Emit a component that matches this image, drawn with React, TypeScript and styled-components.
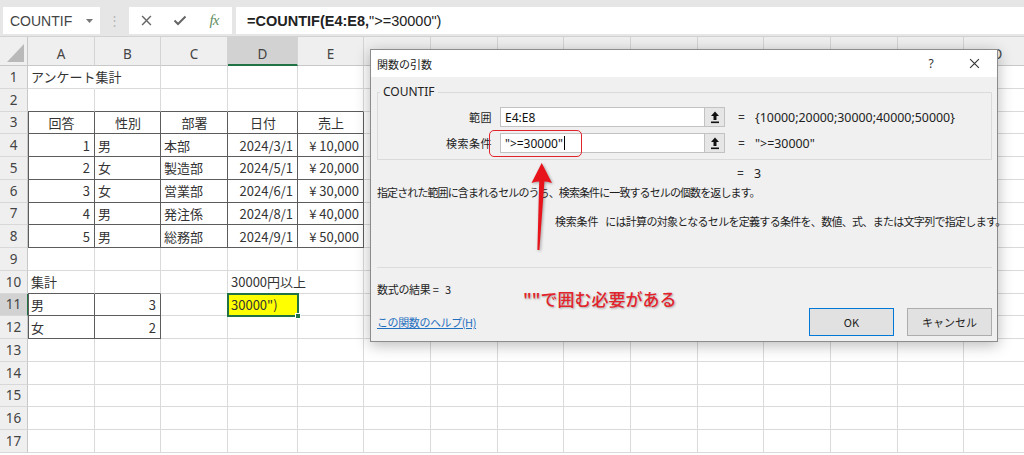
import React from 'react';
import styled, { createGlobalStyle } from 'styled-components';

const GlobalStyle = createGlobalStyle`
  html, body { margin: 0; padding: 0; background: #ffffff; }
  body { overflow: hidden; }
  *, *::before, *::after { box-sizing: border-box; }
`;

const JP = `"Noto Sans CJK JP", "Noto Sans", sans-serif`;
const LATIN = `"Liberation Sans", "Noto Sans CJK JP", sans-serif`;

const Page = styled.div`
  position: relative;
  width: 1024px;
  height: 455px;
  overflow: hidden;
  display: flex;
  flex-direction: column;
  background: #fff;
`;

/* ---------- formula bar ---------- */
const FormulaBar = styled.div`
  display: flex;
  align-items: stretch;
  height: 37px;
  padding: 7px 0 2px 3px;
  background: #e6e6e6;
  border-bottom: 1px solid #d2d2d2;
  flex-shrink: 0;
`;
const NameBox = styled.div`
  width: 97px;
  background: #fff;
  display: flex;
  align-items: center;
  justify-content: space-between;
  padding: 0 7px 0 7px;
  font: 14px ${LATIN};
  color: #444;
`;
const Divider = styled.div`
  width: 29px;
  display: flex;
  align-items: center;
  justify-content: center;
  color: #b8b8b8;
  font: 13px ${LATIN};
`;
const FnButtons = styled.div`
  width: 103px;
  background: #fff;
  display: flex;
`;
const FnSlot = styled.div`
  width: 34px;
  display: flex;
  align-items: center;
  justify-content: center;
`;
const FxText = styled.span`
  font: italic 15px "Liberation Serif", serif;
  color: #5f8f5f;
  letter-spacing: -1px;
`;
const FormulaInput = styled.div`
  flex: 1;
  margin-left: 4px;
  background: #fff;
  display: flex;
  align-items: center;
  padding-left: 11px;
  font: 14.5px ${LATIN};
  color: #222;
  white-space: nowrap;
`;
const Strong = styled.span`
  font-weight: bold;
`;

/* ---------- sheet ---------- */
const Sheet = styled.div`
  display: grid;
  grid-template-columns: 28px 67px 66px 67px 70px 66px 67px 67px 66px 67px 67px 66px 67px 67px 66px 67px;
  grid-template-rows: 29px repeat(17, 22.75px);
  background: #fff;
`;
const Corner = styled.div`
  background: #efefef;
  border-right: 1px solid #c8c8c8;
  border-bottom: 1px solid #c8c8c8;
  display: flex;
  align-items: flex-end;
  justify-content: flex-end;
  padding: 0 3px 3px 0;
`;
const ColHead = styled.div<{ $sel?: boolean }>`
  background: ${(p) => (p.$sel ? '#d2d2d2' : '#efefef')};
  border-right: 1px solid #d4d4d4;
  border-bottom: ${(p) => (p.$sel ? '2px solid #217346' : '1px solid #c8c8c8')};
  display: flex;
  align-items: center;
  justify-content: center;
  padding-top: ${(p) => (p.$sel ? '6px' : '5px')};
  font: 13.5px "Noto Sans", sans-serif;
  color: #444;
`;
const RowHead = styled.div<{ $sel?: boolean }>`
  background: ${(p) => (p.$sel ? '#d2d2d2' : '#efefef')};
  border-right: 1px solid ${(p) => (p.$sel ? '#217346' : '#c8c8c8')};
  border-bottom: 1px solid #d8d8d8;
  display: flex;
  align-items: center;
  justify-content: center;
  font: 13.5px "Noto Sans", sans-serif;
  color: #444;
`;

type Align = 'l' | 'r' | 'c';
const Cell = styled.div<{
  $align?: Align;
  $rb?: boolean;
  $bb?: boolean;
  $lb?: boolean;
  $hr?: boolean;
  $active?: boolean;
}>`
  position: relative;
  z-index: ${(p) => (p.$active ? 2 : p.$hr ? 1 : 'auto')};
  display: flex;
  align-items: center;
  justify-content: ${(p) => (p.$align === 'r' ? 'flex-end' : p.$align === 'c' ? 'center' : 'flex-start')};
  padding: 0 ${(p) => (p.$align === 'r' ? '4px' : '2px')} 0 3px;
  border-right: 1px solid ${(p) => (p.$rb ? '#5c5c5c' : p.$hr ? 'transparent' : '#dadada')};
  border-bottom: 1px solid ${(p) => (p.$bb ? '#5c5c5c' : '#dadada')};
  box-shadow: ${(p) => (p.$lb ? 'inset 1px 0 0 #5c5c5c' : 'none')};
  background: ${(p) => (p.$active ? '#ffff00' : 'transparent')};
  outline: ${(p) => (p.$active ? '2px solid #217346' : 'none')};
  outline-offset: -1px;
  font: 13px ${JP};
  color: #333;
  white-space: nowrap;
  &::after {
    content: '';
    display: ${(p) => (p.$active ? 'block' : 'none')};
    position: absolute;
    right: -4px;
    bottom: -4px;
    width: 6px;
    height: 6px;
    background: #217346;
    border: 1px solid #fff;
  }
`;

/* ---------- dialog ---------- */
const Dialog = styled.div`
  position: absolute;
  left: 370px;
  top: 49px;
  width: 628px;
  height: 293px;
  display: flex;
  flex-direction: column;
  background: #f0f0f0;
  border: 1px solid #8c8c8c;
  box-shadow: 0 3px 14px rgba(0, 0, 0, 0.28);
  font: 11px ${JP};
  color: #1e1e1e;
`;
const TitleBar = styled.div`
  height: 27px;
  background: #fff;
  display: flex;
  align-items: center;
  justify-content: space-between;
  padding-left: 6px;
  flex-shrink: 0;
`;
const TitleText = styled.span`
  font: 11px ${JP};
  color: #222;
`;
const TitleControls = styled.div`
  display: flex;
  height: 100%;
`;
const TitleBtn = styled.div<{ $w: number }>`
  width: ${(p) => p.$w}px;
  display: flex;
  align-items: center;
  justify-content: center;
  font: 12px "Noto Sans", sans-serif;
  color: #333;
`;
const DialogBody = styled.div`
  flex: 1;
  display: flex;
  flex-direction: column;
  padding: 0 5px 0 6px;
`;
const GroupBox = styled.fieldset`
  margin: 8px 0 0 0;
  padding: 8px 0 6px 0;
  border: 1px solid #dadada;
  min-width: 0;
  display: flex;
  flex-direction: column;
  gap: 6px;
`;
const Legend = styled.legend`
  padding: 0 3px;
  margin-left: 2px;
  font: 12px "Noto Sans", sans-serif;
  line-height: 14px;
  color: #222;
`;
const ArgRow = styled.div`
  display: flex;
  align-items: center;
  height: 20px;
`;
const ArgLabel = styled.div`
  width: 114px;
  margin-right: 8px;
  text-align: right;
  font: 11px ${JP};
  letter-spacing: 0.5px;
`;
const ArgInput = styled.div`
  width: 205px;
  height: 20px;
  background: #fff;
  border: 1px solid #c2c2c2;
  display: flex;
  align-items: center;
  padding-left: 4px;
  font: 12px "Noto Sans", sans-serif;
  color: #111;
`;
const Caret = styled.span`
  display: inline-block;
  width: 1px;
  height: 14px;
  background: #000;
  margin-left: 1px;
`;
const RefButton = styled.div`
  width: 20px;
  height: 20px;
  background: #e6e6e6;
  border: 1px solid #c2c2c2;
  border-left: none;
  display: flex;
  align-items: center;
  justify-content: center;
`;
const Eq = styled.span<{ $lead: number }>`
  margin-left: ${(p) => p.$lead}px;
  width: 9px;
  font: 12px "Noto Sans", sans-serif;
  color: #333;
`;
const ArgValue = styled.span`
  margin-left: 8px;
  font: 12.4px "Noto Sans", sans-serif;
  color: #222;
  white-space: nowrap;
`;
const ResultRow = styled.div`
  display: flex;
  align-items: center;
  height: 16px;
  margin-top: 5px;
`;
const Description = styled.div`
  margin-top: 3px;
  height: 16px;
  line-height: 16px;
  letter-spacing: -0.9px;
  white-space: nowrap;
`;
const ArgHelp = styled.div`
  margin-top: 13px;
  height: 16px;
  line-height: 16px;
  padding-left: 178px;
  display: flex;
  white-space: nowrap;
`;
const ArgHelpName = styled.span`
  margin-right: 7px;
  letter-spacing: -0.2px;
`;
const ArgHelpText = styled.span`
  letter-spacing: -0.7px;
`;
const Separator = styled.div`
  margin-top: 38px;
  height: 1px;
  background: #dcdcdc;
`;
const Footer = styled.div`
  flex: 1;
  display: flex;
  justify-content: space-between;
  align-items: flex-end;
  padding-bottom: 5px;
`;
const FooterInfo = styled.div`
  display: flex;
  flex-direction: column;
  align-self: stretch;
  padding-top: 13px;
  gap: 17px;
`;
const FooterLine = styled.div`
  height: 16px;
  line-height: 16px;
  white-space: nowrap;
  letter-spacing: -0.3px;
`;
const HelpLink = styled.a`
  height: 16px;
  line-height: 16px;
  color: #1f6fbf;
  text-decoration: underline;
  white-space: nowrap;
  letter-spacing: -0.4px;
`;
const ButtonRow = styled.div`
  display: flex;
  gap: 13px;
`;
const DlgButton = styled.div<{ $primary?: boolean }>`
  width: 85px;
  height: 28px;
  background: #e1e1e1;
  border: 1px solid ${(p) => (p.$primary ? '#0078d7' : '#adadad')};
  display: flex;
  align-items: center;
  justify-content: center;
  font: 11px ${JP};
  color: #222;
`;

/* ---------- annotation overlays ---------- */
const RedBox = styled.div`
  position: absolute;
  left: 489px;
  top: 130px;
  width: 93px;
  height: 27px;
  border: 1.5px solid #e3232c;
  border-radius: 5px;
`;
const ArrowSvg = styled.svg`
  position: absolute;
  left: 526px;
  top: 158px;
  filter: drop-shadow(1px 1px 1.5px rgba(0, 0, 0, 0.35));
`;
const Note = styled.div`
  position: absolute;
  left: 523px;
  top: 288px;
  font: 500 17px ${JP};
  line-height: 22px;
  color: #e3232c;
  text-shadow: 1px 1px 2px rgba(0, 0, 0, 0.3);
  white-space: nowrap;
`;

/* ---------- data ---------- */
type CellDef = {
  t?: React.ReactNode;
  a?: Align;
  rb?: boolean;
  bb?: boolean;
  lb?: boolean;
  hr?: boolean;
  active?: boolean;
};

const COLS = ['A', 'B', 'C', 'D', 'E', 'F', 'G', 'H', 'I', 'J', 'K', 'L', 'M', 'N', 'O'];

const boxed = (t: string, a: Align, lb = false): CellDef => ({ t, a, rb: true, bb: true, lb });

const tableRows: [string, string, string, string, string][] = [
  ['1', '男', '本部', '2024/3/1', '¥ 10,000'],
  ['2', '女', '製造部', '2024/5/1', '¥ 20,000'],
  ['3', '女', '営業部', '2024/6/1', '¥ 30,000'],
  ['4', '男', '発注係', '2024/8/1', '¥ 40,000'],
  ['5', '男', '総務部', '2024/9/1', '¥ 50,000'],
];

const sheetData: Record<number, Record<string, CellDef>> = {
  1: { A: { t: 'アンケート集計', hr: true } },
  2: { A: { bb: true }, B: { bb: true }, C: { bb: true }, D: { bb: true }, E: { bb: true } },
  3: {
    A: boxed('回答', 'c', true),
    B: boxed('性別', 'c'),
    C: boxed('部署', 'c'),
    D: boxed('日付', 'c'),
    E: boxed('売上', 'c'),
  },
  10: {
    A: { t: '集計', bb: true },
    B: { bb: true },
    D: { t: '30000円以上', hr: true },
  },
  11: {
    A: boxed('男', 'l', true),
    B: boxed('3', 'r'),
    D: { t: '30000")', active: true },
  },
  12: {
    A: boxed('女', 'l', true),
    B: boxed('2', 'r'),
  },
};
tableRows.forEach((r, i) => {
  sheetData[4 + i] = {
    A: boxed(r[0], 'r', true),
    B: boxed(r[1], 'l'),
    C: boxed(r[2], 'l'),
    D: boxed(r[3], 'r'),
    E: boxed(r[4], 'r'),
  };
});

/* ---------- icons ---------- */
const CrossIcon = ({ size = 10, color = '#666', w = 1.3 }: { size?: number; color?: string; w?: number }) => (
  <svg width={size} height={size} viewBox="0 0 10 10">
    <path d="M1 1 L9 9 M9 1 L1 9" stroke={color} strokeWidth={w} fill="none" />
  </svg>
);
const CheckIcon = () => (
  <svg width="14" height="11" viewBox="0 0 14 11">
    <path d="M1.5 5.5 L5 9 L12.5 1.5" stroke="#666" strokeWidth="2" fill="none" />
  </svg>
);
const DropArrow = () => (
  <svg width="7" height="4" viewBox="0 0 7 4">
    <path d="M0 0 L7 0 L3.5 4 Z" fill="#777" />
  </svg>
);
const CornerTriangle = () => (
  <svg width="17" height="18" viewBox="0 0 17 18">
    <path d="M17 0 L17 18 L0 18 Z" fill="#b9b9b9" />
  </svg>
);
const RefIcon = () => (
  <svg width="10" height="13" viewBox="0 0 10 13">
    <path d="M5 0.5 L9 5 L6.5 5 L6.5 9 L3.5 9 L3.5 5 L1 5 Z" fill="#111" />
    <rect x="1" y="10.5" width="8" height="1.6" fill="#111" />
  </svg>
);

export default function App() {
  const rowNums = Array.from({ length: 17 }, (_, i) => i + 1);
  return (
    <Page>
      <GlobalStyle />
      <FormulaBar>
        <NameBox>
          <span>COUNTIF</span>
          <DropArrow />
        </NameBox>
        <Divider>⋮</Divider>
        <FnButtons>
          <FnSlot>
            <CrossIcon size={11} />
          </FnSlot>
          <FnSlot>
            <CheckIcon />
          </FnSlot>
          <FnSlot>
            <FxText>fx</FxText>
          </FnSlot>
        </FnButtons>
        <FormulaInput>
          <Strong>=COUNTIF(E4:E8,</Strong>
          <span>"&gt;=30000")</span>
        </FormulaInput>
      </FormulaBar>

      <Sheet>
        <Corner>
          <CornerTriangle />
        </Corner>
        {COLS.map((c) => (
          <ColHead key={c} $sel={c === 'D'}>
            {c}
          </ColHead>
        ))}
        {rowNums.map((r) => (
          <React.Fragment key={r}>
            <RowHead $sel={r === 11}>{r}</RowHead>
            {COLS.map((c) => {
              const d = sheetData[r]?.[c] ?? {};
              return (
                <Cell
                  key={c}
                  $align={d.a}
                  $rb={d.rb}
                  $bb={d.bb}
                  $lb={d.lb}
                  $hr={d.hr}
                  $active={d.active}
                >
                  {d.t}
                </Cell>
              );
            })}
          </React.Fragment>
        ))}
      </Sheet>

      <Dialog>
        <TitleBar>
          <TitleText>関数の引数</TitleText>
          <TitleControls>
            <TitleBtn $w={42}>?</TitleBtn>
            <TitleBtn $w={45}>
              <CrossIcon size={11} color="#333" w={1} />
            </TitleBtn>
          </TitleControls>
        </TitleBar>
        <DialogBody>
          <GroupBox>
            <Legend>COUNTIF</Legend>
            <ArgRow>
              <ArgLabel>範囲</ArgLabel>
              <ArgInput>E4:E8</ArgInput>
              <RefButton>
                <RefIcon />
              </RefButton>
              <Eq $lead={13}>=</Eq>
              <ArgValue>{'{10000;20000;30000;40000;50000}'}</ArgValue>
            </ArgRow>
            <ArgRow>
              <ArgLabel>検索条件</ArgLabel>
              <ArgInput>
                "&gt;=30000"
                <Caret />
              </ArgInput>
              <RefButton>
                <RefIcon />
              </RefButton>
              <Eq $lead={13}>=</Eq>
              <ArgValue>"&gt;=30000"</ArgValue>
            </ArgRow>
          </GroupBox>
          <ResultRow>
            <Eq $lead={360}>=</Eq>
            <ArgValue>3</ArgValue>
          </ResultRow>
          <Description>
            指定された範囲に含まれるセルのうち、検索条件に一致するセルの個数を返します。
          </Description>
          <ArgHelp>
            <ArgHelpName>検索条件</ArgHelpName>
            <ArgHelpText>には計算の対象となるセルを定義する条件を、数値、式、または文字列で指定します。</ArgHelpText>
          </ArgHelp>
          <Separator />
          <Footer>
            <FooterInfo>
              <FooterLine>数式の結果 =&nbsp;&nbsp; 3</FooterLine>
              <HelpLink>この関数のヘルプ(H)</HelpLink>
            </FooterInfo>
            <ButtonRow>
              <DlgButton $primary>OK</DlgButton>
              <DlgButton>キャンセル</DlgButton>
            </ButtonRow>
          </Footer>
        </DialogBody>
      </Dialog>

      <RedBox />
      <ArrowSvg width="32" height="100" viewBox="0 0 32 100">
        <path
          d="M15.7 5 L26 25 Q21 23.6 18.4 23.6 L13.4 92 L11.4 92 L13.2 23.6 Q10.5 23.6 5.5 25 Z"
          fill="#e8141c"
        />
      </ArrowSvg>
      <Note>""で囲む必要がある</Note>
    </Page>
  );
}
